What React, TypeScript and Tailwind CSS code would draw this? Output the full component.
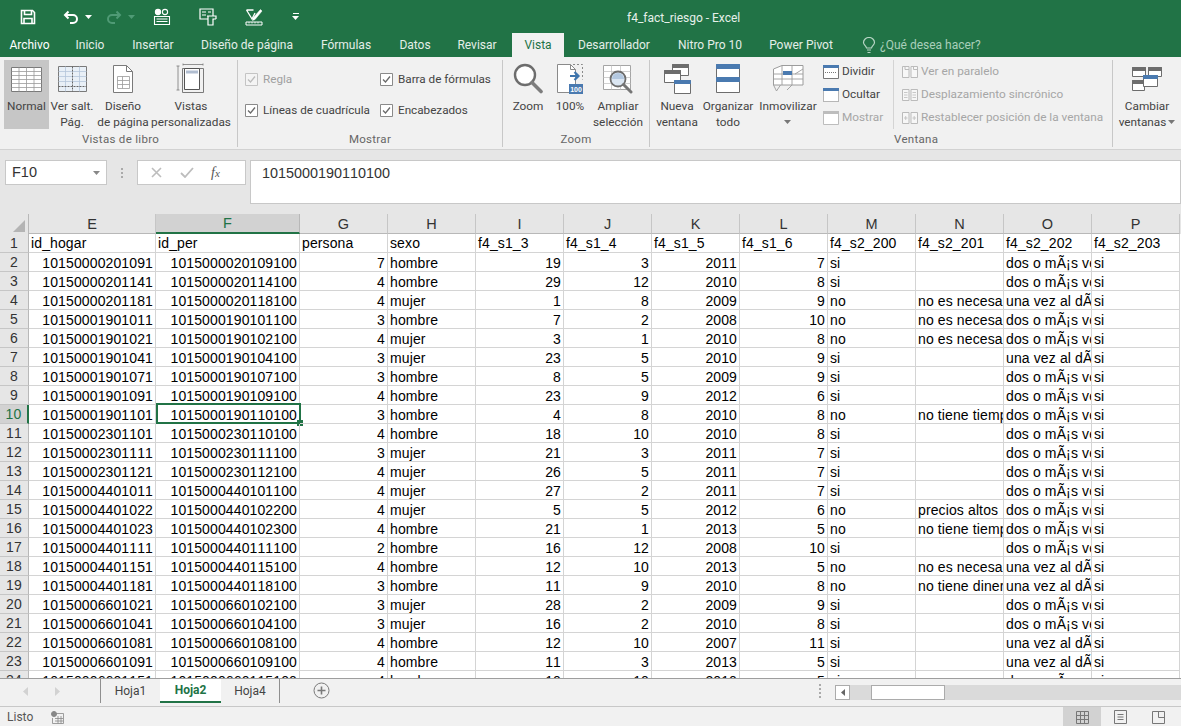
const ui = "font-['Roboto','Noto_Sans',sans-serif]";

const columns = [
  { name: "E", w: "w-[127px]" },
  { name: "F", w: "w-[144px]" },
  { name: "G", w: "w-[88px]" },
  { name: "H", w: "w-[88px]" },
  { name: "I", w: "w-[88px]" },
  { name: "J", w: "w-[88px]" },
  { name: "K", w: "w-[88px]" },
  { name: "L", w: "w-[88px]" },
  { name: "M", w: "w-[88px]" },
  { name: "N", w: "w-[88px]" },
  { name: "O", w: "w-[88px]" },
  { name: "P", w: "w-[88px]" },
];

const header = ["id_hogar", "id_per", "persona", "sexo", "f4_s1_3", "f4_s1_4", "f4_s1_5", "f4_s1_6", "f4_s2_200", "f4_s2_201", "f4_s2_202", "f4_s2_203"];

const DOS = "dos o mÃ¡s veces";
const UNA = "una vez al dÃ­a";
const NEC = "no es necesario";
const TIE = "no tiene tiempo";
const DIN = "no tiene dinero";

const rows: (string | number)[][] = [
  ["10150000201091", "1015000020109100", 7, "hombre", 19, 3, 2011, 7, "si", "", DOS, "si"],
  ["10150000201141", "1015000020114100", 4, "hombre", 29, 12, 2010, 8, "si", "", DOS, "si"],
  ["10150000201181", "1015000020118100", 4, "mujer", 1, 8, 2009, 9, "no", NEC, UNA, "si"],
  ["10150001901011", "1015000190101100", 3, "hombre", 7, 2, 2008, 10, "no", NEC, DOS, "si"],
  ["10150001901021", "1015000190102100", 4, "mujer", 3, 1, 2010, 8, "no", NEC, DOS, "si"],
  ["10150001901041", "1015000190104100", 3, "mujer", 23, 5, 2010, 9, "si", "", UNA, "si"],
  ["10150001901071", "1015000190107100", 3, "hombre", 8, 5, 2009, 9, "si", "", DOS, "si"],
  ["10150001901091", "1015000190109100", 4, "hombre", 23, 9, 2012, 6, "si", "", DOS, "si"],
  ["10150001901101", "1015000190110100", 3, "hombre", 4, 8, 2010, 8, "no", TIE, DOS, "si"],
  ["10150002301101", "1015000230110100", 4, "hombre", 18, 10, 2010, 8, "si", "", DOS, "si"],
  ["10150002301111", "1015000230111100", 3, "mujer", 21, 3, 2011, 7, "si", "", DOS, "si"],
  ["10150002301121", "1015000230112100", 4, "mujer", 26, 5, 2011, 7, "si", "", DOS, "si"],
  ["10150004401011", "1015000440101100", 4, "mujer", 27, 2, 2011, 7, "si", "", DOS, "si"],
  ["10150004401022", "1015000440102200", 4, "mujer", 5, 5, 2012, 6, "no", "precios altos", DOS, "si"],
  ["10150004401023", "1015000440102300", 4, "hombre", 21, 1, 2013, 5, "no", TIE, DOS, "si"],
  ["10150004401111", "1015000440111100", 2, "hombre", 16, 12, 2008, 10, "si", "", DOS, "si"],
  ["10150004401151", "1015000440115100", 4, "hombre", 12, 10, 2013, 5, "no", NEC, UNA, "si"],
  ["10150004401181", "1015000440118100", 3, "hombre", 11, 9, 2010, 8, "no", DIN, UNA, "si"],
  ["10150006601021", "1015000660102100", 3, "mujer", 28, 2, 2009, 9, "si", "", DOS, "si"],
  ["10150006601041", "1015000660104100", 3, "mujer", 16, 2, 2010, 8, "si", "", DOS, "si"],
  ["10150006601081", "1015000660108100", 4, "hombre", 12, 10, 2007, 11, "si", "", UNA, "si"],
  ["10150006601091", "1015000660109100", 4, "hombre", 11, 3, 2013, 5, "si", "", UNA, "si"],
  ["10150006601151", "1015000660115100", 4, "hombre", 10, 10, 2010, 5, "si", "", DOS, "si"],
];

function IconSave() {
  return (
    <svg width="16" height="16" viewBox="0 0 16 16" fill="none" stroke="#fff" strokeWidth="1.6">
      <path d="M1.5 1.5h11l2 2v11h-13z" />
      <path d="M4.5 1.5v4h7v-4M4 14.5v-5h8v5" />
    </svg>
  );
}

function IconUndo() {
  return (
    <svg width="16" height="14" viewBox="0 0 16 14" fill="none" stroke="#fff" strokeWidth="2">
      <path d="M5.5 1.5 2 5l3.5 3.5M2 5h8a3.6 3.6 0 0 1 0 8H7" />
    </svg>
  );
}

function IconRedo() {
  return (
    <svg width="16" height="14" viewBox="0 0 16 14" fill="none" stroke="#4f9a75" strokeWidth="2">
      <path d="M10.5 1.5 14 5l-3.5 3.5M14 5H6a3.6 3.6 0 0 0 0 8h3" />
    </svg>
  );
}

function IconForm() {
  return (
    <svg width="18" height="18" viewBox="0 0 18 18" fill="none" stroke="#fff" strokeWidth="1.1">
      <circle cx="5" cy="4" r="2.6" fill="#fff" />
      <circle cx="12" cy="4" r="2.6" />
      <path d="M1.5 8.5h15v8h-15zM3.5 11h11M3.5 13.5h11" />
    </svg>
  );
}

function IconPreview() {
  return (
    <svg width="18" height="18" viewBox="0 0 18 18" fill="none" stroke="#fff" strokeWidth="1.2">
      <path d="M1 1h13v10H1zM3 4h4M3 7h4M9 4h3" />
      <path d="M8 8h9v3M9 8v9h5V11h3" fill="#217346" />
    </svg>
  );
}

function IconSpell() {
  return (
    <svg width="18" height="18" viewBox="0 0 18 18" fill="none" stroke="#fff" strokeWidth="1.3">
      <path d="M1.5 2 7 11 10 5M1.5 2h7" />
      <path d="M8 10 15.5 1.5 17 3 10 11.5l-2.5 1z" fill="#fff" strokeWidth="0.5" />
      <path d="M1 14h16v3H1z" strokeWidth="1" />
      <path d="M4 14v1.5M7 14v1.5M10 14v1.5M13 14v1.5" strokeWidth="0.8" />
    </svg>
  );
}

function Caret({ color = "#fff" }: { color?: string }) {
  return (
    <svg width="7" height="4" viewBox="0 0 7 4">
      <path d="M0 0h7L3.5 4z" fill={color} />
    </svg>
  );
}

function IconNormal() {
  return (
    <svg width="31" height="25" viewBox="0 0 31 25" fill="#fff" stroke="#7a7a7a" strokeWidth="1">
      <path d="M.5.500h30v24H.5z" />
      <path d="M.5 4.500h30M.5 8.500h30M.5 12.500h30M.5 16.500h30M.5 20.500h30M8 .5v24M15.500.5v24M23 .5v24" fill="none" strokeWidth="0.8" stroke="#9a9a9a" />
    </svg>
  );
}

function IconBreak() {
  return (
    <svg width="29" height="26" viewBox="0 0 29 26" fill="none" stroke="#7a7a7a" strokeWidth="1">
      <path d="M.5.500h28v25H.5z" fill="#e9f0f7" />
      <path d="M.5 5.500h28M.5 10.500h28M.5 15.500h28M7.500.5v25M21.500.5v25" stroke="#b5c7da" strokeWidth="0.8" />
      <path d="M14.500.5v25M.5 20.500h28" strokeDasharray="2 1" stroke="#666" />
    </svg>
  );
}

function IconPageLayout() {
  return (
    <svg width="22" height="30" viewBox="0 0 22 30" fill="#fff" stroke="#7a7a7a" strokeWidth="1">
      <path d="M1.500 1.500h13l6 6v21h-19z" />
      <path d="M14.500 1.500v6h6" fill="none" />
      <path d="M5.500 12.500h12v12h-12zM5.500 16.500h12M5.500 20.500h12M10.500 12.500v12" fill="none" stroke="#999" strokeWidth="0.8" />
    </svg>
  );
}

function IconCustomView() {
  return (
    <svg width="30" height="32" viewBox="0 0 30 32" fill="none" stroke="#7a7a7a" strokeWidth="1">
      <path d="M2 3v24M.5 3h3M.5 27h3M7 1.500h20M7 .5v2M27 .5v2" strokeWidth="0.8" />
      <path d="M6.500 5.500h21v24h-21z" />
      <path d="M8.500 5.500h15v21h-15z" fill="#fff" stroke="#555" />
      <path d="M10 7.500h12v3H10z" fill="#b0bdd0" stroke="none" />
    </svg>
  );
}

function IconZoom() {
  return (
    <svg width="30" height="32" viewBox="0 0 30 32" fill="none">
      <circle cx="12" cy="12" r="10" stroke="#6d6d6d" strokeWidth="2.4" fill="#fff" />
      <path d="M19 19.500 28 28.500" stroke="#7d7d7d" strokeWidth="3.6" strokeLinecap="round" />
    </svg>
  );
}

function Icon100() {
  return (
    <svg width="28" height="32" viewBox="0 0 28 32" fill="none">
      <path d="M1.500 1.500h13l5 5v23h-18z" fill="#fff" stroke="#8a8a8a" />
      <path d="M14.500 1.500v5h5" stroke="#8a8a8a" />
      <path d="M17 1.500h9.500v15" stroke="#8a8a8a" strokeDasharray="2 2" />
      <path d="M14 13h8M18.500 9l4 4-4 4" stroke="#3e75ad" strokeWidth="2.2" />
      <rect x="13" y="21" width="14" height="10" fill="#4a7ab0" />
      <text x="20" y="29" fontSize="7" fill="#fff" textAnchor="middle" fontFamily="Liberation Sans, sans-serif" fontWeight="700">100</text>
    </svg>
  );
}

function IconZoomSel() {
  return (
    <svg width="32" height="30" viewBox="0 0 32 30" fill="none">
      <path d="M1.500 1.500h27v24h-27z" fill="#fff" stroke="#a5a5a5" />
      <path d="M1.500 7.500h27M1.500 13.500h27M1.500 19.500h27M9.500 1.500v24M18.500 1.500v24" stroke="#c5c5c5" strokeWidth="0.8" />
      <circle cx="16" cy="15" r="7.500" fill="#dbe6f2" stroke="#6d6d6d" strokeWidth="1.8" />
      <path d="M10 15a6 6 0 0 1 12 0z" fill="#b3c8e0" />
      <path d="M21.500 20.500 29 28" stroke="#767676" strokeWidth="3" strokeLinecap="round" />
    </svg>
  );
}

function IconNewWindow() {
  return (
    <svg width="28" height="32" viewBox="0 0 28 32" fill="#fff" stroke="#6d6d6d" strokeWidth="1">
      <path d="M9.500 1.500h16v11h-16z" />
      <path d="M9.500 1.500h16v3h-16z" fill="#6d6d6d" />
      <path d="M1.500 7.500h16v12h-16z" />
      <path d="M1.500 7.500h16v3h-16z" fill="#6d6d6d" />
      <path d="M11.500 17.500h16v13h-16z" />
      <path d="M11.500 17.500h16v3h-16z" fill="#4a7ab0" stroke="#4a7ab0" />
    </svg>
  );
}

function IconArrange() {
  return (
    <svg width="24" height="30" viewBox="0 0 24 30" fill="#fff" stroke="#6d6d6d" strokeWidth="1">
      <path d="M.5.500h23v28h-23z" />
      <path d="M.5.500h23v4h-23z" fill="#4a7ab0" stroke="#4a7ab0" />
      <path d="M.5 13.500h23v4h-23z" fill="#4a7ab0" stroke="#4a7ab0" />
    </svg>
  );
}

function IconFreeze() {
  return (
    <svg width="32" height="30" viewBox="0 0 32 30" fill="none" stroke="#9c9c9c" strokeWidth="1">
      <path d="M1.500 5 10 1.500h21v19.500H1.500z" fill="#fff" />
      <path d="M1.500 10h29.500M1.500 15h29.500M10 1.500V21M20 1.500V21M1.500 21l3 6 4-6M20 21l-5 5M31 5l-8 5" strokeWidth="0.9" />
      <path d="M11 7h9v4h-9z" fill="#4a7ab0" stroke="none" />
    </svg>
  );
}

function IconSwitch() {
  return (
    <svg width="30" height="26" viewBox="0 0 30 26" fill="#fff" stroke="#6d6d6d" strokeWidth="1">
      <path d="M.5 1.500h13v9H.5z" />
      <path d="M.5 1.500h13v3H.5z" fill="#6d6d6d" />
      <path d="M16.500 1.500h13v9h-13z" />
      <path d="M16.500 1.500h13v3h-13z" fill="#6d6d6d" />
      <path d="M.5 14.500h12v10H.5z" />
      <path d="M.5 14.500h12v3H.5z" fill="#6d6d6d" />
      <path d="M11.500 9.500h14v11h-14z" />
      <path d="M11.500 9.500h14v3h-14z" fill="#4a7ab0" stroke="#4a7ab0" />
    </svg>
  );
}

function IconSplit({ kind }: { kind: "split" | "hide" | "show" }) {
  const bar = kind === "show" ? "#bdbdbd" : "#4a7ab0";
  const line = kind === "show" ? "#bdbdbd" : "#777";
  return (
    <svg width="16" height="14" viewBox="0 0 16 14" fill="none">
      <path d="M.5.500h15v13H.5z" fill="#fff" stroke={line} strokeDasharray={kind === "hide" ? "1 1" : undefined} />
      <path d="M0 0h16v3H0z" fill={bar} />
      {kind === "split" && <path d="M2 7.500h12" stroke="#777" strokeDasharray="1 1" />}
    </svg>
  );
}

function IconSide({ kind }: { kind: "par" | "sync" | "reset" }) {
  return (
    <svg width="16" height="14" viewBox="0 0 16 14" fill="#f7f7f7" stroke="#bbb" strokeWidth="1">
      <path d="M.5 1.500h6.500v11H.5zM9 1.500h6.500v11H9z" />
      {kind === "par" && <path d="M3 1.500v3h4M11.500 1.500v3h4" fill="none" />}
      {kind === "sync" && <path d="M2 4.500h3.500M2 7h3.500M2 9.500h3.500M10.500 4.500H14M10.500 7H14M10.500 9.500H14" fill="none" strokeWidth="0.8" />}
      {kind === "reset" && <path d="M2 7h3.500M3.700 5v4M10.500 7H14M12.200 5v4" fill="none" strokeWidth="0.8" />}
    </svg>
  );
}

function IconBulb() {
  return (
    <svg width="14" height="17" viewBox="0 0 14 17" fill="none" stroke="#b9d6c6" strokeWidth="1.2">
      <path d="M4.500 11C4 8.500 1.500 8 1.500 5.500a5.500 5 0 0 1 11 0C12.500 8 10 8.500 9.500 11z" />
      <path d="M5 13h4M5.500 15.500h3" />
    </svg>
  );
}

function Check({ disabled }: { disabled?: boolean }) {
  const c = disabled ? "#bcbcbc" : "#6a6a6a";
  return (
    <svg width="13" height="13" viewBox="0 0 13 13" fill="none">
      <path d="M.5.500h12v12H.5z" fill={disabled ? "#f4f4f4" : "#fff"} stroke={disabled ? "#c4c4c4" : "#8a8a8a"} />
      <path d="M3 6.500 5.500 9 10 3.500" stroke={c} strokeWidth="1.3" />
    </svg>
  );
}

function BigButton({ icon, lines, active, className, caret }: { icon: React.ReactNode; lines: string[]; active?: boolean; className: string; caret?: boolean }) {
  return (
    <div className={`flex h-[69px] flex-col items-center ${active ? "bg-[#c6c6c6]" : ""} ${className}`}>
      <div className="flex h-[38px] shrink-0 items-center justify-center">{icon}</div>
      <div className="flex flex-col items-center whitespace-nowrap text-[11.8px] leading-[16px] text-[#444]">
        {lines.map((l) => (
          <span key={l}>{l}</span>
        ))}
        {caret && (
          <span className="mt-[6px]">
            <Caret color="#777" />
          </span>
        )}
      </div>
    </div>
  );
}

function Group({ label, className, children }: { label: string; className: string; children: React.ReactNode }) {
  return (
    <div className={`flex h-[87px] shrink-0 flex-col border-r border-[#c8c8c8] ${className}`}>
      <div className="flex h-[72px] items-start">{children}</div>
      <div className="text-center text-[11.5px] leading-[15px] tracking-[0.3px] text-[#666]">{label}</div>
    </div>
  );
}

function CheckItem({ label, disabled }: { label: string; disabled?: boolean }) {
  return (
    <div className={`flex h-[31px] items-center gap-[5px] whitespace-nowrap text-[11.7px] ${disabled ? "text-[#a0a0a0]" : "text-[#444]"}`}>
      <Check disabled={disabled} />
      <span>{label}</span>
    </div>
  );
}

function SmallItem({ icon, label, disabled }: { icon: React.ReactNode; label: string; disabled?: boolean }) {
  return (
    <div className={`flex h-[23px] items-center gap-[3px] whitespace-nowrap text-[11.8px] ${disabled ? "text-[#a6a6a6]" : "text-[#444]"}`}>
      {icon}
      <span>{label}</span>
    </div>
  );
}

function Ribbon() {
  return (
    <div className={`flex h-[93px] items-start overflow-hidden border-b border-[#d2d2d2] bg-[#f1f1f1] pl-[4px] pt-[3px] ${ui}`}>
      <Group label="Vistas de libro" className="w-[234px]">
        <BigButton icon={<IconNormal />} lines={["Normal"]} active className="w-[45px]" />
        <BigButton icon={<IconBreak />} lines={["Ver salt.", "Pág."]} className="w-[46px]" />
        <BigButton icon={<IconPageLayout />} lines={["Diseño", "de página"]} className="w-[56px]" />
        <BigButton icon={<IconCustomView />} lines={["Vistas", "personalizadas"]} className="w-[80px]" />
      </Group>
      <Group label="Mostrar" className="w-[265px]">
        <div className="ml-[7px] w-[135px] pt-[4px]">
          <CheckItem label="Regla" disabled />
          <CheckItem label="Líneas de cuadrícula" />
        </div>
        <div className="pt-[4px]">
          <CheckItem label="Barra de fórmulas" />
          <CheckItem label="Encabezados" />
        </div>
      </Group>
      <Group label="Zoom" className="w-[147px]">
        <BigButton icon={<IconZoom />} lines={["Zoom"]} className="ml-[5px] w-[40px]" />
        <BigButton icon={<Icon100 />} lines={["100%"]} className="w-[44px]" />
        <BigButton icon={<IconZoomSel />} lines={["Ampliar", "selección"]} className="w-[52px]" />
      </Group>
      <div className="flex h-[87px] w-[463px] shrink-0 flex-col border-r border-[#c8c8c8]">
        <div className="flex h-[72px] items-start">
          <BigButton icon={<IconNewWindow />} lines={["Nueva", "ventana"]} className="ml-[2px] w-[50px]" />
          <BigButton icon={<IconArrange />} lines={["Organizar", "todo"]} className="w-[52px]" />
          <BigButton icon={<IconFreeze />} lines={["Inmovilizar"]} caret className="w-[68px]" />
          <div className="ml-[1px] w-[71px] border-r border-[#d4d4d4]">
            <SmallItem icon={<IconSplit kind="split" />} label="Dividir" />
            <SmallItem icon={<IconSplit kind="hide" />} label="Ocultar" />
            <SmallItem icon={<IconSplit kind="show" />} label="Mostrar" disabled />
          </div>
          <div className="ml-[8px]">
            <SmallItem icon={<IconSide kind="par" />} label="Ver en paralelo" disabled />
            <SmallItem icon={<IconSide kind="sync" />} label="Desplazamiento sincrónico" disabled />
            <SmallItem icon={<IconSide kind="reset" />} label="Restablecer posición de la ventana" disabled />
          </div>
        </div>
        <div className="pl-[244px] text-[11.5px] leading-[15px] tracking-[0.3px] text-[#666]">Ventana</div>
      </div>
      <div className="flex h-[72px] w-[68px] shrink-0 flex-col items-center">
        <div className="flex h-[38px] shrink-0 items-center"><IconSwitch /></div>
        <div className="flex flex-col items-center text-[11.8px] leading-[16px] text-[#444]">
          <span>Cambiar</span>
          <span className="flex items-center gap-[2px]">ventanas <Caret color="#777" /></span>
        </div>
      </div>
    </div>
  );
}

function TitleBar() {
  const tabs = [
    ["Inicio", "w-[62px]"],
    ["Insertar", "w-[64px]"],
    ["Diseño de página", "w-[124px]"],
    ["Fórmulas", "w-[74px]"],
    ["Datos", "w-[64px]"],
    ["Revisar", "w-[60px]"],
  ];
  return (
    <div className={`h-[57px] bg-[#217346] text-white ${ui}`}>
      <div className="relative flex h-[33px] items-center pl-[20px]">
        <IconSave />
        <div className="ml-[27px] flex items-center gap-[6px]">
          <IconUndo />
          <Caret />
        </div>
        <div className="ml-[14px] flex items-center gap-[6px]">
          <IconRedo />
          <Caret color="#4f9a75" />
        </div>
        <div className="ml-[18px]"><IconForm /></div>
        <div className="ml-[28px]"><IconPreview /></div>
        <div className="ml-[28px]"><IconSpell /></div>
        <div className="ml-[29px] flex flex-col items-center gap-[2px]">
          <span className="h-px w-[6px] bg-white" />
          <Caret />
        </div>
        <div className="absolute left-[627px] top-[9px] whitespace-nowrap text-[12px] leading-[18px] text-[#e6f0ea]">f4_fact_riesgo - Excel</div>
      </div>
      <div className="flex h-[24px] items-center text-[12px] text-[#e4eee8]">
        <div className="w-[59px] text-center text-white">Archivo</div>
        {tabs.map(([t, w]) => (
          <div key={t} className={`text-center ${w}`}>{t}</div>
        ))}
        <div className="ml-[5px] flex h-[24px] w-[52px] items-center justify-center bg-[#f1f1f1] text-[#217346]">Vista</div>
        <div className="w-[100px] text-center">Desarrollador</div>
        <div className="w-[92px] text-center">Nitro Pro 10</div>
        <div className="w-[90px] text-center">Power Pivot</div>
        <div className="ml-[16px] flex items-center gap-[4px] text-[#a9cfba]">
          <IconBulb />
          <span>¿Qué desea hacer?</span>
        </div>
      </div>
    </div>
  );
}

function FormulaBar() {
  return (
    <div className="flex h-[64px] items-start bg-[#e6e6e6] pl-[5px] pt-[10px]">
      <div className="flex h-[25px] w-[102px] items-center justify-between border border-[#c8c8c8] bg-white pl-[6px] pr-[6px] font-['Liberation_Sans',sans-serif] text-[14.5px] text-[#333]">
        F10
        <Caret color="#888" />
      </div>
      <div className="flex h-[25px] w-[30px] flex-col items-center justify-center gap-[2px]">
        <span className="h-[2px] w-[2px] bg-[#aaa]" />
        <span className="h-[2px] w-[2px] bg-[#aaa]" />
        <span className="h-[2px] w-[2px] bg-[#aaa]" />
      </div>
      <div className="flex h-[25px] w-[109px] items-center border border-[#c8c8c8] bg-white">
        <svg className="ml-[13px]" width="11" height="11" viewBox="0 0 11 11" stroke="#bdbdbd" strokeWidth="1.6"><path d="M1 1l9 9M10 1l-9 9" /></svg>
        <svg className="ml-[18px]" width="14" height="11" viewBox="0 0 14 11" fill="none" stroke="#bdbdbd" strokeWidth="1.8"><path d="M1 6l4 4 8-9" /></svg>
        <span className="ml-[17px] font-['Liberation_Serif',serif] text-[14px] italic text-[#555]">f<span className="text-[11px]">x</span></span>
      </div>
      <div className="ml-[4px] flex h-[44px] min-w-0 flex-1 items-start border border-[#c8c8c8] bg-white pl-[11px] pt-[3px] font-['Liberation_Sans',sans-serif] text-[14.4px] leading-[18px] text-[#333] [font-kerning:none]">
        1015000190110100
      </div>
    </div>
  );
}

function ColumnHeaders() {
  return (
    <div className="flex h-[20px] bg-[#e6e6e6] font-['Liberation_Sans',sans-serif] text-[14.5px] text-[#333]">
      <div className="relative h-[20px] w-[29px] shrink-0 border-r border-[#b8b8b8]">
        <div className="absolute bottom-[2px] right-[3px] h-0 w-0 border-b-[12px] border-l-[12px] border-b-[#b4b4b4] border-l-transparent" />
      </div>
      {columns.map((c) => (
        <div
          key={c.name}
          className={`flex shrink-0 items-center justify-center border-r leading-[18px] ${c.w} ${c.name === "F" ? "border-b-2 border-b-[#217346] border-r-[#b8b8b8] bg-[#d2d2d2] text-[#217346]" : "border-b border-b-[#b8b8b8] border-r-[#c6c6c6]"}`}
        >
          {c.name}
        </div>
      ))}
    </div>
  );
}

function Cell({ value, w, left, selected, head }: { value: string | number; w: string; left: boolean; selected?: boolean; head?: boolean }) {
  return (
    <div className={`relative h-[19px] shrink-0 border-b border-r border-[#d4d4d4] ${w}`}>
      <div className={`overflow-hidden whitespace-nowrap px-[2px] ${head ? "leading-[18px]" : "leading-[20px]"} ${left ? "text-left" : "text-right"}`}>{value}</div>
      {selected && (
        <>
          <div className="absolute bottom-[-1px] left-0 right-[-2px] top-[-2px] border-2 border-[#217346]" />
          <div className="absolute bottom-[-3px] right-[-4px] h-[6px] w-[6px] bg-[#217346]" />
        </>
      )}
    </div>
  );
}

function Sheet() {
  return (
    <div className="h-[444px] overflow-hidden bg-white font-['Liberation_Sans',sans-serif] text-[14px] tracking-[0.12px] text-black [font-kerning:none]">
      <div className="flex">
        <div className="flex h-[19px] w-[29px] shrink-0 items-center justify-center border-b border-r border-b-[#c6c6c6] border-r-[#b8b8b8] bg-[#e6e6e6] text-[#333]">1</div>
        {header.map((h, i) => (
          <Cell key={h} value={h} w={columns[i].w} left head />
        ))}
      </div>
      {rows.map((r, ri) => (
        <div key={ri} className="flex">
          <div className={`flex h-[19px] w-[29px] shrink-0 items-center justify-center border-b border-b-[#c6c6c6] pt-[1px] ${ri === 8 ? "border-r-2 border-r-[#217346] bg-[#d2d2d2] text-[#217346]" : "border-r border-r-[#b8b8b8] bg-[#e6e6e6] text-[#333]"}`}>{ri + 2}</div>
          {r.map((v, ci) => (
            <Cell key={ci} value={v} w={columns[ci].w} left={ci === 3 || ci >= 8} selected={ri === 8 && ci === 1} />
          ))}
        </div>
      ))}
    </div>
  );
}

function SheetTabs() {
  return (
    <div className={`flex h-[29px] items-start border-b border-t border-b-[#c8c8c8] border-t-[#9e9e9e] bg-[#f1f1f1] text-[12px] text-[#444] ${ui}`}>
      <div className="flex h-[24px] w-[101px] items-center justify-end border-r border-[#8f8f8f]">
        <svg width="5" height="9" viewBox="0 0 5 9" className="mr-[27px]"><path d="M5 0v9L0 4.500z" fill="#d2d2d2" /></svg>
        <svg width="5" height="9" viewBox="0 0 5 9" className="mr-[40px]"><path d="M0 0v9l5-4.500z" fill="#d2d2d2" /></svg>
      </div>
      <div className="flex h-[24px] w-[59px] items-center justify-center">Hoja1</div>
      <div className="flex h-[24px] w-[61px] items-center justify-center border-b-2 border-[#217346] bg-white font-bold text-[#217346]">Hoja2</div>
      <div className="flex h-[24px] w-[59px] items-center justify-center border-r border-[#8f8f8f]">Hoja4</div>
      <svg className="ml-[33px] mt-[3px]" width="17" height="17" viewBox="0 0 17 17" fill="none" stroke="#7a7a7a">
        <circle cx="8.500" cy="8.500" r="7.500" />
        <path d="M8.500 4.500v8M4.500 8.500h8" strokeWidth="1.6" />
      </svg>
      <div className="ml-[489px] mt-[5px] flex flex-col gap-[2px]">
        <span className="h-[2px] w-[2px] bg-[#aaa]" />
        <span className="h-[2px] w-[2px] bg-[#aaa]" />
        <span className="h-[2px] w-[2px] bg-[#aaa]" />
        <span className="h-[2px] w-[2px] bg-[#aaa]" />
      </div>
      <div className="ml-[14px] mt-[6px] flex h-[15px] flex-1 bg-[#dadada]">
        <div className="flex w-[15px] items-center justify-center border border-[#ababab] bg-white">
          <svg width="4" height="7" viewBox="0 0 4 7"><path d="M4 0v7L0 3.500z" fill="#666" /></svg>
        </div>
        <div className="ml-[21px] w-[74px] border border-[#ababab] bg-white" />
      </div>
    </div>
  );
}

function StatusBar() {
  return (
    <div className={`flex h-[20px] items-center bg-[#f1f1f1] pl-[7px] pr-[4px] text-[12px] text-[#555] ${ui}`}>
      <span className="w-[44px]">Listo</span>
      <svg width="13" height="13" viewBox="0 0 13 13" fill="none" stroke="#888">
        <circle cx="3" cy="3" r="2.500" fill="#888" />
        <path d="M5 2.500h7.500v10h-11V7M4 7.500h8M4 10h8M7 5v7.500M10 5v7.500" strokeWidth="0.8" />
      </svg>
      <div className="ml-auto flex h-[20px] items-center">
        <div className="flex h-[20px] w-[38px] items-center justify-center bg-[#d2d2d2]">
          <svg width="13" height="13" viewBox="0 0 13 13" fill="none" stroke="#777"><path d="M.5.500h12v12H.5zM.5 4.500h12M.5 8.500h12M4.500.500v12M8.500.500v12" /></svg>
        </div>
        <div className="flex h-[20px] w-[38px] items-center justify-center">
          <svg width="13" height="14" viewBox="0 0 13 14" fill="none" stroke="#777"><path d="M.5.500h12v13H.5zM3.500 4.500h6M3.500 7h6M3.500 9.500h6" /></svg>
        </div>
        <div className="flex h-[20px] w-[38px] items-center justify-center">
          <svg width="13" height="13" viewBox="0 0 13 13" fill="none" stroke="#777"><path d="M.5.500h12v12H.5zM6.500.500v6h6" /></svg>
        </div>
      </div>
    </div>
  );
}

export default function App() {
  return (
    <div className="h-[726px] w-[1181px] overflow-hidden bg-[#e6e6e6]">
      <TitleBar />
      <Ribbon />
      <FormulaBar />
      <ColumnHeaders />
      <Sheet />
      <SheetTabs />
      <StatusBar />
    </div>
  );
}
